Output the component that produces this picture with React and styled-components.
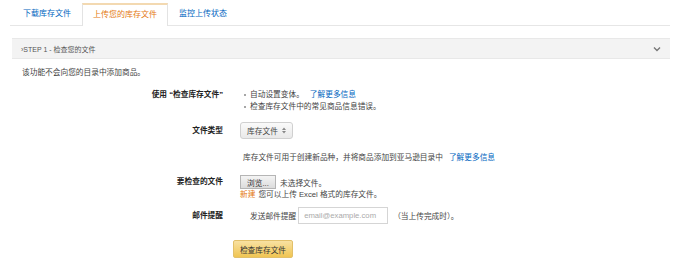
import React from 'react';
import styled, { createGlobalStyle } from 'styled-components';

const GlobalStyle = createGlobalStyle`
  body {
    margin: 0;
    background: #fff;
    font-family: "Liberation Sans", "Noto Sans CJK SC", sans-serif;
    color: #333;
  }
`;

const Page = styled.div`
  width: 696px;
  height: 273px;
  box-sizing: border-box;
  padding: 3px 26px 0 10px;
  font-size: 7.7px;
`;

const TabBar = styled.div`
  display: flex;
  padding-left: 2px;
  border-bottom: 1px solid #e6e6e6;
`;

const Tab = styled.div`
  padding: 0 10px;
  height: ${(p) => (p.$active ? '20px' : '22px')};
  line-height: ${(p) => (p.$active ? '20px' : '22px')};
  color: ${(p) => (p.$active ? '#e47911' : '#0066c0')};
  background: #fff;
  border: ${(p) => (p.$active ? '1px solid #e3e3e3' : '1px solid transparent')};
  border-top: ${(p) => (p.$active ? '2px solid #f3d9b1' : '0')};
  border-bottom: 0;
  margin-bottom: -1px;
  padding-bottom: ${(p) => (p.$active ? '1px' : '0')};
  font-size: 8px;
`;

const StepHeader = styled.div`
  margin: 12px 0 0 2px;
  height: 21px;
  display: flex;
  align-items: center;
  justify-content: space-between;
  padding: 0 9px 0 9px;
  background: #f3f3f3;
  border-top: 1px solid #e8e8e8;
  border-bottom: 1px solid #e8e8e8;
  box-sizing: border-box;
  font-size: 7px;
  color: #555;
`;

const Intro = styled.p`
  margin: 8px 0 0 12px;
  line-height: 12px;
  color: #444;
`;

const Row = styled.div`
  display: grid;
  grid-template-columns: 213px 1fr;
  column-gap: 17px;
  align-items: ${(p) => p.$align || 'center'};
  margin-top: ${(p) => p.$top}px;
`;

const Label = styled.div`
  text-align: right;
  font-weight: bold;
  color: #222;
  line-height: ${(p) => p.$lh || 12}px;
`;

const Bullets = styled.ul`
  margin: 0;
  padding-left: 10px;
  line-height: 12px;
  color: #444;
  list-style: none;

  li {
    position: relative;
  }
  li::before {
    content: '';
    position: absolute;
    left: -6px;
    top: 5px;
    width: 2px;
    height: 2px;
    border-radius: 50%;
    background: #888;
  }
`;

const Link = styled.a`
  color: #0066c0;
  text-decoration: none;
  margin-left: 6px;
`;

const Select = styled.div`
  width: 53px;
  height: 17px;
  box-sizing: border-box;
  display: flex;
  align-items: center;
  justify-content: center;
  gap: 4px;
  border: 1px solid #d0d0d0;
  border-radius: 3px;
  background: linear-gradient(#fafafa, #e9e9e9);
  color: #444;
`;

const Note = styled.div`
  padding-left: 3px;
  line-height: 12px;
  color: #444;
`;

const FileLine = styled.div`
  display: flex;
  align-items: center;
  gap: 4px;
  color: #444;
`;

const Browse = styled.div`
  width: 36px;
  height: 14px;
  box-sizing: border-box;
  border: 1px solid #b5b5b5;
  background: linear-gradient(#f4f4f4, #dcdcdc);
  display: flex;
  align-items: center;
  justify-content: center;
  color: #333;
`;

const Hint = styled.div`
  line-height: 12px;
  color: #444;
`;

const New = styled.span`
  color: #e47911;
  margin-right: 3px;
`;

const EmailLine = styled.div`
  display: flex;
  align-items: center;
  padding-left: 10px;
  color: #444;
`;

const EmailInput = styled.div`
  width: 90px;
  height: 17px;
  box-sizing: border-box;
  margin: 0 5px 0 2px;
  border: 1px solid #d5d5d5;
  display: flex;
  align-items: center;
  padding-left: 5px;
  color: #aaa;
`;

const Submit = styled.div`
  width: 60px;
  height: 18px;
  box-sizing: border-box;
  margin-left: -7px;
  border: 1px solid #e2c06a;
  border-radius: 2px;
  background: linear-gradient(#f8e1a2, #f0c552);
  display: flex;
  align-items: center;
  justify-content: center;
  color: #333;
`;

const Arrows = () => (
  <svg width="4" height="7" viewBox="0 0 4 7">
    <path d="M0 3 L2 0.5 L4 3 Z M0 4 L2 6.5 L4 4 Z" fill="#888" />
  </svg>
);

const Chevron = () => (
  <svg width="8" height="6" viewBox="0 0 8 6">
    <path d="M1 1.5 L4 4.5 L7 1.5" stroke="#777" strokeWidth="1.4" fill="none" />
  </svg>
);

const App = () => {
  return (
    <Page>
      <GlobalStyle />
      <TabBar>
        <Tab>下载库存文件</Tab>
        <Tab $active>上传您的库存文件</Tab>
        <Tab>监控上传状态</Tab>
      </TabBar>
      <StepHeader>
        <span>›STEP 1 - 检查您的文件</span>
        <Chevron />
      </StepHeader>
      <Intro>该功能不会向您的目录中添加商品。</Intro>

      <Row $top={10} $align="start">
        <Label>使用 “检查库存文件”</Label>
        <Bullets>
          <li>
            自动设置变体。<Link>了解更多信息</Link>
          </li>
          <li>检查库存文件中的常见商品信息错误。</li>
        </Bullets>
      </Row>

      <Row $top={9}>
        <Label>文件类型</Label>
        <div>
          <Select>
            库存文件 <Arrows />
          </Select>
        </div>
      </Row>

      <Row $top={13}>
        <span />
        <Note>
          库存文件可用于创建新品种，并将商品添加到亚马逊目录中<Link>了解更多信息</Link>
        </Note>
      </Row>

      <Row $top={11} $align="start">
        <Label $lh={14}>要检查的文件</Label>
        <div>
          <FileLine>
            <Browse>浏览...</Browse>
            未选择文件。
          </FileLine>
          <Hint>
            <New>新建</New>您可以上传 Excel 格式的库存文件。
          </Hint>
        </div>
      </Row>

      <Row $top={6}>
        <Label>邮件提醒</Label>
        <EmailLine>
          发送邮件提醒
          <EmailInput>email@example.com</EmailInput>
          （当上传完成时）。
        </EmailLine>
      </Row>

      <Row $top={16}>
        <span />
        <div>
          <Submit>检查库存文件</Submit>
        </div>
      </Row>
    </Page>
  );
};

export default App;
